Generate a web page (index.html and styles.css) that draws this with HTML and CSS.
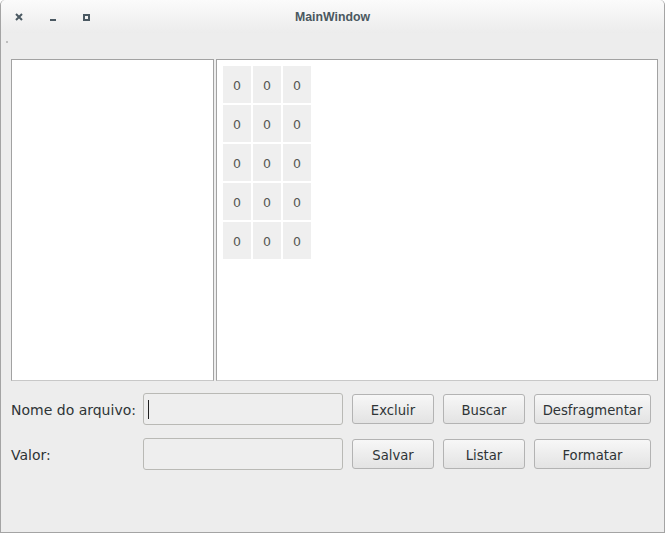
FILE: index.html
```html
<!DOCTYPE html>
<html>
<head>
<meta charset="utf-8">
<link rel="stylesheet" href="styles.css">
</head>
<body>
<div class="window">
  <div class="titlebar">
    <div class="controls">
      <svg class="ctl" width="8" height="8" viewBox="0 0 8 8"><path d="M1 1 L7 7 M7 1 L1 7" stroke="#4b5962" stroke-width="2"/></svg>
      <svg class="ctl min" width="6" height="3" viewBox="0 0 6 3"><rect x="0" y="0" width="6" height="2" fill="#4b5962"/></svg>
      <svg class="ctl max" width="7" height="7" viewBox="0 0 7 7"><rect x="1" y="1" width="5" height="5" fill="none" stroke="#4b5962" stroke-width="2"/></svg>
    </div>
    <div class="title">MainWindow</div>
  </div>
  <div class="menubar"><span class="grip"></span></div>
  <div class="panels">
    <div class="panel left-panel"></div>
    <div class="panel right-panel">
      <div class="cells">
        <div class="cell">0</div><div class="cell">0</div><div class="cell">0</div>
        <div class="cell">0</div><div class="cell">0</div><div class="cell">0</div>
        <div class="cell">0</div><div class="cell">0</div><div class="cell">0</div>
        <div class="cell">0</div><div class="cell">0</div><div class="cell">0</div>
        <div class="cell">0</div><div class="cell">0</div><div class="cell">0</div>
      </div>
    </div>
  </div>
  <div class="form">
    <div class="label">Nome do arquivo:</div>
    <div class="input"><span class="caret"></span></div>
    <button class="btn">Excluir</button>
    <button class="btn">Buscar</button>
    <button class="btn">Desfragmentar</button>
    <div class="label">Valor:</div>
    <div class="input"></div>
    <button class="btn">Salvar</button>
    <button class="btn">Listar</button>
    <button class="btn">Formatar</button>
  </div>
</div>
</body>
</html>
```

FILE: styles.css
```css
html, body {
  margin: 0;
  padding: 0;
  background: #ffffff;
}
body {
  font-family: "DejaVu Sans", sans-serif;
  font-size: 13px;
  color: #2e3436;
}
.window {
  box-sizing: border-box;
  width: 665px;
  height: 533px;
  background: #ededed;
  border-left: 1px solid #a4a4a4;
  border-right: 1px solid #a4a4a4;
  border-bottom: 1px solid #a4a4a4;
  border-top-left-radius: 5px;
  border-top-right-radius: 5px;
  display: flex;
  flex-direction: column;
}
.titlebar {
  height: 33px;
  flex: none;
  background: linear-gradient(#fbfbfb, #ececec);
  border-top-left-radius: 5px;
  border-top-right-radius: 5px;
  display: flex;
  align-items: center;
  position: relative;
}
.controls {
  display: flex;
  align-items: center;
  padding-left: 14px;
  height: 100%;
}
.ctl {
  display: block;
  margin-top: 1px;
}
.ctl.min {
  margin-left: 27px;
  margin-top: 8px;
}
.ctl.max {
  margin-left: 27px;
  margin-top: 1px;
}
.title {
  position: absolute;
  left: 0;
  right: 0;
  top: 0;
  line-height: 35px;
  text-align: center;
  font-family: "Liberation Sans", sans-serif;
  font-weight: bold;
  font-size: 12.3px;
  color: #4a5860;
}
.menubar {
  height: 26px;
  flex: none;
  position: relative;
}
.grip {
  display: block;
  width: 2px;
  height: 2px;
  background: #bdbdbd;
  margin: 8px 0 0 5px;
}
.panels {
  display: flex;
  gap: 2px;
  padding: 0 6px 0 10px;
  height: 322px;
  flex: none;
}
.panel {
  box-sizing: border-box;
  background: #ffffff;
  border: 1px solid #a2a2a2;
  border-bottom-color: #c8c8c8;
  height: 100%;
}
.left-panel {
  width: 203px;
}
.right-panel {
  flex: 1;
  padding: 6px;
}
.cells {
  display: grid;
  grid-template-columns: repeat(3, 28px);
  grid-auto-rows: 37px;
  gap: 2px;
}
.cell {
  background: #efefef;
  display: flex;
  align-items: center;
  justify-content: center;
  padding-top: 2px;
  box-sizing: border-box;
  font-size: 12.5px;
  color: #555753;
}
.form {
  display: grid;
  grid-template-columns: 123px 200px 82px 82px 117px;
  grid-auto-rows: 32px;
  column-gap: 9px;
  row-gap: 13px;
  padding: 12px 0 0 10px;
  align-items: start;
}
.label {
  white-space: nowrap;
  line-height: 34px;
  font-size: 14px;
  color: #2e3436;
}
.input {
  box-sizing: border-box;
  height: 32px;
  border: 1px solid #b9b9b5;
  border-radius: 3px;
  background: #eeeeee;
  position: relative;
}
.caret {
  position: absolute;
  left: 4px;
  top: 6px;
  width: 1px;
  height: 19px;
  background: #222222;
}
.btn {
  box-sizing: border-box;
  margin: 1px 0 0 0;
  height: 30px;
  border: 1px solid #b3b3b3;
  border-radius: 3px;
  background: linear-gradient(#f7f7f7, #e3e3e3);
  font-family: "DejaVu Sans", sans-serif;
  font-size: 13.2px;
  color: #2e3436;
  padding: 2px 0 0 0;
}
```
